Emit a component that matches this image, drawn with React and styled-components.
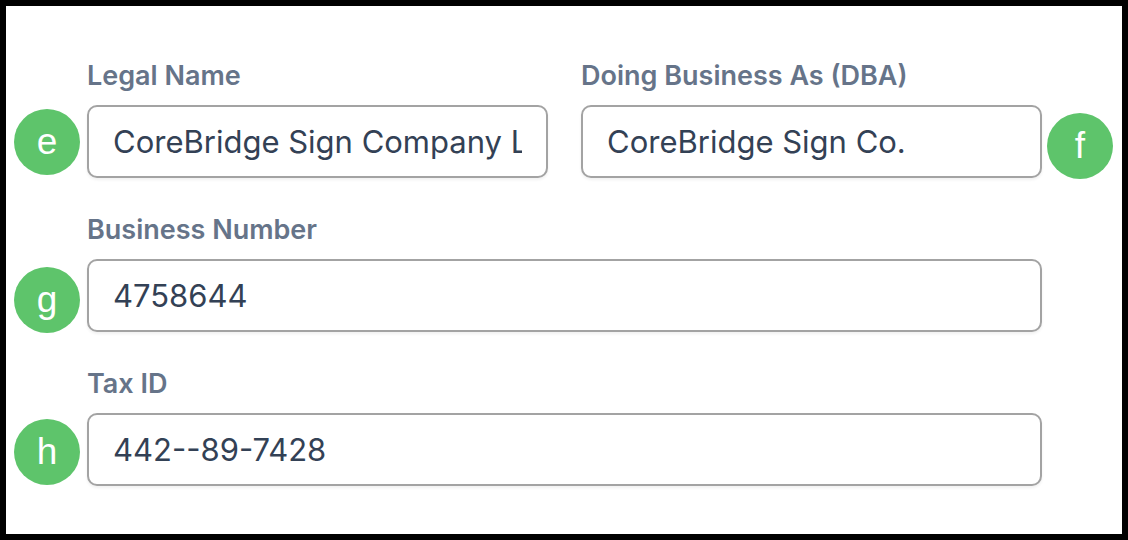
import React from "react";
import styled, { createGlobalStyle } from "styled-components";

const GlobalStyle = createGlobalStyle`
  html, body {
    margin: 0;
    padding: 0;
    background: #000000;
  }
  body {
    font-family: Inter, "Noto Sans", "Liberation Sans", sans-serif;
  }
`;

const Panel = styled.div`
  margin: 6px;
  width: 1116px;
  height: 528px;
  box-sizing: border-box;
  background: #ffffff;
  padding: 55px 0 0 81px;
`;

const Form = styled.div`
  width: 955px;
  display: flex;
  flex-direction: column;
  gap: 37px;
`;

const Row = styled.div`
  display: grid;
  grid-template-columns: ${({ $cols }) => ($cols === 2 ? "1fr 1fr" : "1fr")};
  column-gap: 33px;
`;

const Field = styled.div`
  display: flex;
  flex-direction: column;
  gap: 14px;
`;

const Label = styled.label`
  font-size: 27px;
  line-height: 30px;
  font-weight: 600;
  color: #667489;
`;

const InputWrap = styled.div`
  position: relative;
`;

const Input = styled.input`
  display: block;
  width: 100%;
  height: 73px;
  box-sizing: border-box;
  border: 2px solid #a3a3a3;
  border-radius: 10px;
  padding: 0 24px;
  font-family: Inter, "Noto Sans", "Liberation Sans", sans-serif;
  font-size: 31px;
  color: #334155;
  background: #ffffff;
  box-shadow: 0 2px 3px rgba(0, 0, 0, 0.06);
  outline: none;
`;

const Marker = styled.span`
  position: absolute;
  top: 50%;
  width: 66px;
  height: 66px;
  margin-top: ${({ $drop }) => -33 + $drop}px;
  border-radius: 50%;
  background: #5ec46b;
  color: #ffffff;
  display: flex;
  align-items: center;
  justify-content: center;
  font-family: "Liberation Sans", Arial, sans-serif;
  font-size: 37px;
  line-height: 1;
  ${({ $side }) => ($side === "right" ? "right: -71px;" : "left: -73px;")}
`;

const fields = [
  [
    { label: "Legal Name", value: "CoreBridge Sign Company LLC", marker: "e", drop: 0 },
    { label: "Doing Business As (DBA)", value: "CoreBridge Sign Co.", marker: "f", side: "right", drop: 4 },
  ],
  [{ label: "Business Number", value: "4758644", marker: "g", drop: 4 }],
  [{ label: "Tax ID", value: "442--89-7428", marker: "h", drop: 2 }],
];

export default function App() {
  return (
    <>
      <GlobalStyle />
      <Panel>
        <Form>
          {fields.map((row, i) => (
            <Row key={i} $cols={row.length}>
              {row.map((f) => (
                <Field key={f.label}>
                  <Label>{f.label}</Label>
                  <InputWrap>
                    <Input defaultValue={f.value} readOnly />
                    <Marker $side={f.side} $drop={f.drop}>
                      {f.marker}
                    </Marker>
                  </InputWrap>
                </Field>
              ))}
            </Row>
          ))}
        </Form>
      </Panel>
    </>
  );
}
